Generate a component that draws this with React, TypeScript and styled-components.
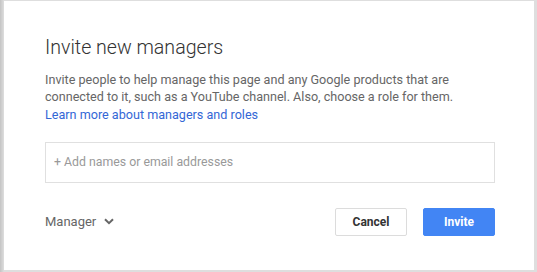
import React from "react";
import styled, { createGlobalStyle } from "styled-components";

const GlobalStyle = createGlobalStyle`
  html, body {
    margin: 0;
    padding: 0;
    background: #d6d6d6;
  }
  body {
    font-family: Roboto, "Liberation Sans", Arial, sans-serif;
    -webkit-font-smoothing: antialiased;
  }
`;

const Frame = styled.div`
  width: 537px;
  height: 272px;
  box-sizing: border-box;
  padding: 1px 3px 2px 4px;
  background: linear-gradient(to right, #c4c4c4 0px, #dedede 4px, #dedede 100%);
`;

const Dialog = styled.div`
  height: 100%;
  box-sizing: border-box;
  background: #fff;
  padding: 35px 39px 0 41px;
  display: flex;
  flex-direction: column;
`;

const Title = styled.h2`
  margin: 0;
  font-size: 19.6px;
  line-height: 24px;
  font-weight: 300;
  color: #333;
`;

const Description = styled.p`
  margin: 11px 0 0;
  font-size: 12.6px;
  line-height: 17.3px;
  color: #666;
`;

const Link = styled.a`
  color: #3367d6;
  text-decoration: none;
  cursor: pointer;
`;

const Input = styled.input`
  margin-top: 19px;
  height: 41px;
  box-sizing: border-box;
  border: 1px solid #e0e0e0;
  padding: 0 8px;
  font-family: inherit;
  font-size: 12.3px;
  color: #333;
  outline: none;
  &::placeholder {
    color: #999;
  }
`;

const Footer = styled.div`
  margin-top: 25px;
  display: flex;
  align-items: center;
`;

const RoleSelect = styled.button`
  display: flex;
  align-items: center;
  gap: 8px;
  padding: 0;
  border: none;
  background: none;
  font-family: inherit;
  font-size: 13px;
  color: #666;
  cursor: pointer;
`;

const Spacer = styled.div`
  flex: 1;
`;

const Button = styled.button<{ primary?: boolean }>`
  width: 72px;
  height: 28px;
  box-sizing: border-box;
  margin-left: 16px;
  border-radius: 2px;
  border: 1px solid ${(p) => (p.primary ? "#4285f4" : "#dcdcdc")};
  background: ${(p) => (p.primary ? "#4285f4" : "#fff")};
  color: ${(p) => (p.primary ? "#fff" : "#333")};
  font-family: inherit;
  font-size: 12px;
  font-weight: 700;
  cursor: pointer;
`;

const Chevron = () => (
  <svg width="10" height="7" viewBox="0 0 10 7">
    <path d="M1 1.2 L5 5.2 L9 1.2" fill="none" stroke="#666" strokeWidth="2" />
  </svg>
);

export default function App() {
  return (
    <>
      <GlobalStyle />
      <Frame>
        <Dialog>
          <Title>Invite new managers</Title>
          <Description>
            Invite people to help manage this page and any Google products that are
            connected to it, such as a YouTube channel. Also, choose a role for them.
            <br />
            <Link>Learn more about managers and roles</Link>
          </Description>
          <Input placeholder="+ Add names or email addresses" />
          <Footer>
            <RoleSelect>
              Manager
              <Chevron />
            </RoleSelect>
            <Spacer />
            <Button>Cancel</Button>
            <Button primary>Invite</Button>
          </Footer>
        </Dialog>
      </Frame>
    </>
  );
}
